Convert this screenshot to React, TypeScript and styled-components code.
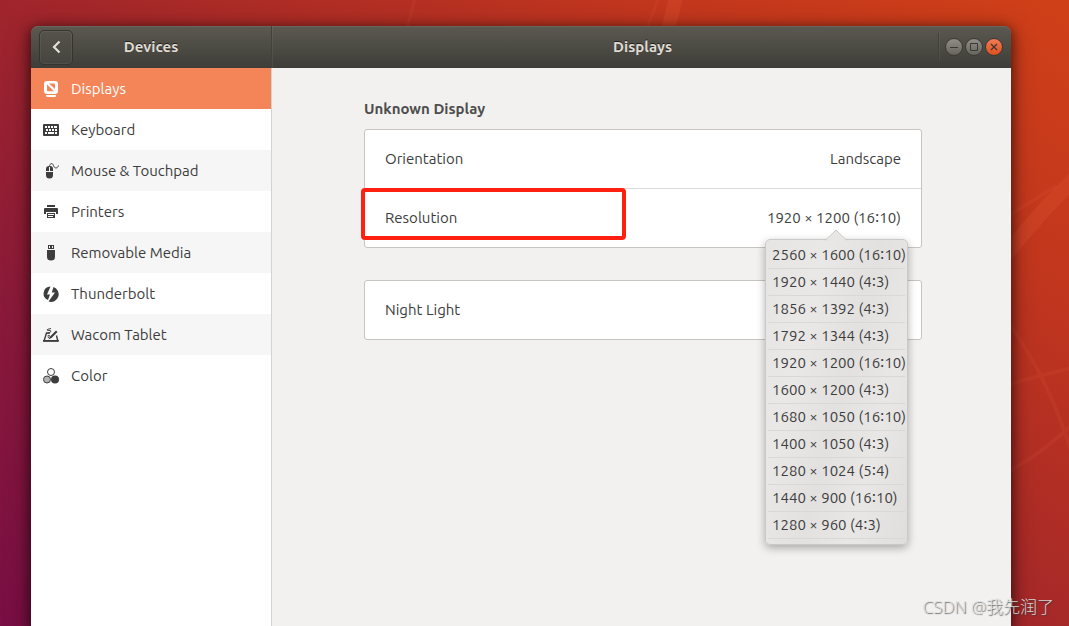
import React from "react";
import styled, { createGlobalStyle, css } from "styled-components";

const GlobalStyle = createGlobalStyle`
  *, *::before, *::after { box-sizing: border-box; }
  body {
    margin: 0;
    font-family: Ubuntu, Inter, "Noto Sans", "Noto Sans CJK SC", sans-serif;
    font-size: 15px;
    line-height: 20px;
    color: #3d3d3d;
  }
  button, select { font: inherit; color: inherit; }
`;

const Desktop = styled.div`
  position: relative;
  display: flex;
  min-height: 100vh;
  padding: 26px 58px 0 31px;
  overflow: hidden;
  background: linear-gradient(34deg, #780e44 0%, #8b1a39 25%, #a52829 52%, #c1361e 78%, #d04018 100%);
`;

const Wallpaper = styled.svg`
  position: absolute;
  inset: 0;
  width: 100%;
  height: 100%;
`;

const Window = styled.div`
  position: relative;
  flex: 1;
  display: flex;
  flex-direction: column;
  min-width: 0;
  border-radius: 7px 7px 0 0;
  box-shadow: 0 3px 12px 2px rgba(0, 0, 0, 0.5), 0 6px 28px rgba(0, 0, 0, 0.25);
`;

const HeaderBar = styled.header`
  display: flex;
  height: 42px;
  border-radius: 7px 7px 0 0;
  background: linear-gradient(#5b5950, #3e3d38);
  box-shadow: inset 0 1px #68665d;
  color: #dfdbd2;
  text-shadow: 0 -1px rgba(0, 0, 0, 0.6);
`;

const HeaderSection = styled.div<{ $side?: boolean }>`
  display: grid;
  grid-template-columns: 1fr auto 1fr;
  align-items: center;
  ${({ $side }) =>
    $side
      ? css`
          width: 241px;
          padding: 0 8px;
          border-right: 1px solid #42413b;
        `
      : css`
          flex: 1;
          padding: 0 8px 0 10px;
          box-shadow: inset 1px 0 rgba(255, 255, 255, 0.06);
        `}
`;

const Title = styled.h1`
  grid-column: 2;
  margin: 0;
  font-size: 15px;
  font-weight: 700;
  line-height: 20px;
`;

const BackButton = styled.button`
  display: grid;
  place-items: center;
  width: 34px;
  height: 35px;
  padding: 0;
  border: 1px solid #35342f;
  border-radius: 5px;
  background: linear-gradient(#55534b, #45443e);
  box-shadow: inset 0 0 0 1px rgba(255, 255, 255, 0.06);
`;

const WindowControls = styled.div`
  justify-self: end;
  display: flex;
  align-items: center;
  gap: 2px;
  height: 28px;
  padding-left: 6px;
  border-left: 1px solid #403f39;
  box-shadow: inset 1px 0 rgba(255, 255, 255, 0.06);
`;

const ControlButton = styled.button<{ $close?: boolean }>`
  display: grid;
  place-items: center;
  width: 18px;
  height: 18px;
  padding: 0;
  border: 1px solid #3a3933;
  border-radius: 50%;
  color: #3a3933;
  background: ${({ $close }) =>
    $close ? "linear-gradient(#f37b55, #e04f1c)" : "linear-gradient(#908e86, #66645c)"};
`;

const Body = styled.div`
  flex: 1;
  display: flex;
`;

const Sidebar = styled.nav`
  width: 241px;
  background: #fff;
  border-right: 1px solid #d5d3d0;
`;

const NavItem = styled.a<{ $active?: boolean }>`
  display: flex;
  align-items: center;
  gap: 12px;
  height: 41px;
  padding-left: 12px;
  text-decoration: none;
  color: ${({ $active }) => ($active ? "#fff" : "#3d3d3d")};
  background: ${({ $active }) => ($active ? "#f38559" : "#fff")};
  &:nth-child(2n + 3) {
    background: #f6f6f6;
  }
`;

const Content = styled.main`
  flex: 1;
  min-width: 0;
  padding: 30px 89px 40px 92px;
  background: #f2f1ef;
`;

const SectionTitle = styled.h2`
  margin: 0 0 9px;
  font-size: 15px;
  font-weight: 700;
  line-height: 22px;
  color: #4d4d4d;
`;

const Card = styled.section`
  border: 1px solid #c8c5c1;
  border-radius: 3px;
  background: #fff;
  & + & {
    margin-top: 32px;
  }
`;

const Row = styled.div`
  position: relative;
  display: flex;
  align-items: center;
  justify-content: space-between;
  height: 58px;
  padding: 0 20px;
  & + & {
    height: 59px;
    border-top: 1px solid #dcdad8;
  }
`;

const ValueSelect = styled.select`
  appearance: none;
  padding: 0;
  border: 0;
  background: none;
  text-align: right;
  text-align-last: right;
`;

const PlainButton = styled.button`
  padding: 0;
  border: 0;
  background: none;
`;

const Highlight = styled.div`
  position: absolute;
  top: -1px;
  left: -4px;
  width: 265px;
  height: 52px;
  border: 4px solid #ff2010;
  border-radius: 4px;
`;

const Popover = styled.ul`
  position: absolute;
  z-index: 1;
  top: 50px;
  right: 13px;
  width: 143px;
  margin: 0;
  padding: 2px 2px 5px;
  list-style: none;
  border: 1px solid #cbc9c6;
  border-radius: 5px;
  background: linear-gradient(105deg, #e6e5e3 0%, #e9e8e7 28%, #e2e1df 52%, #e8e7e6 74%, #dfdedc 100%);
  box-shadow: 0 3px 8px rgba(0, 0, 0, 0.3);
`;

const Pointer = styled.svg`
  position: absolute;
  top: -11px;
  left: 58px;
  width: 24px;
  height: 12px;
`;

const Option = styled.button`
  display: block;
  width: 100%;
  height: 27px;
  padding: 0 4px;
  border: 0;
  border-bottom: 1px solid #dad8d6;
  background: none;
  text-align: left;
  white-space: nowrap;
`;

const Watermark = styled.div`
  position: absolute;
  right: 15px;
  bottom: 6px;
  font-family: "Open Sans", "Noto Sans CJK SC", sans-serif;
  font-size: 17px;
  font-weight: 300;
  line-height: 26px;
  color: rgba(228, 228, 228, 0.9);
  text-shadow: 1px 1px 1px rgba(60, 60, 60, 0.8);
`;

const Icon = ({ children }: { children: React.ReactNode }) => (
  <svg width="16" height="16" viewBox="0 0 16 16" fill="currentColor" aria-hidden="true">
    {children}
  </svg>
);

const DisplaysIcon = () => (
  <Icon>
    <path
      fillRule="evenodd"
      d="M4 0h8a3 3 0 0 1 3 3v7a3 3 0 0 1-3 3H4a3 3 0 0 1-3-3V3a3 3 0 0 1 3-3zM6 2.500 12 8V3.500a1 1 0 0 0-1-1zM4 3.500V9.200a1 1 0 0 0 1 1h6z"
    />
    <path d="M3 14h10v1a1 1 0 0 1-1 1H4a1 1 0 0 1-1-1z" />
  </Icon>
);

const KeyboardIcon = () => (
  <Icon>
    <path
      fillRule="evenodd"
      d="M1 2h14a1 1 0 0 1 1 1v10a1 1 0 0 1-1 1H1a1 1 0 0 1-1-1V3a1 1 0 0 1 1-1zM2 4v2h2V4zM5 4v2h2V4zM8 4v2h2V4zM11 4v2h3V4zM3 7v2h2V7zM6 7v2h2V7zM9 7v2h2V7zM12 7v2h2V7zM2 10v2h2v-2zM5 10v2h6v-2zM12 10v2h2v-2z"
    />
  </Icon>
);

const MouseIcon = () => (
  <Icon>
    <path d="M6 3v5H3V6a3 3 0 0 1 3-3zM7 3a3 3 0 0 1 3 3v2H7zM3 9h7v3a3.500 3.500 0 0 1-7 0z" />
    <path d="M6.500 4C6.500-.5 10 0 10.500 2.500S14 6.500 15.500 2.500" fill="none" stroke="currentColor" />
  </Icon>
);

const PrinterIcon = () => (
  <Icon>
    <path d="M4 1h8v2H4zM2 4h12a1 1 0 0 1 1 1v5h-2V8H3v2H1V5a1 1 0 0 1 1-1z" />
    <path fillRule="evenodd" d="M4 9h8v5H4zM5 10v1h6v-1zM5 12v1h5v-1z" />
  </Icon>
);

const UsbIcon = () => (
  <Icon>
    <path fillRule="evenodd" d="M5 0h6v4H5zM6 1v2h1V1zM9 1v2h1V1z" />
    <path d="M4 5h8v7a4 3.500 0 0 1-8 0z" />
  </Icon>
);

const ThunderboltIcon = () => (
  <Icon>
    <path d="M7.500 .5 4 8.500h3L5 14A7 7 0 0 1 7.500 .5z" />
    <path d="M10.500 1A7 7 0 0 1 5.500 15.500L12 6.500H8.800z" />
  </Icon>
);

const TabletIcon = () => (
  <Icon>
    <path
      d="M7 6H3.500L1 14H14.800L13.500 8.500"
      fill="none"
      stroke="currentColor"
      strokeWidth="1.400"
    />
    <path d="M0 13h16l-.4 1.500H.2zM5.500 12.500 7 9.500 13 3.500l1.500 1.500L8.500 11z" />
    <path d="M8 1.500C3 2.500 3 3.500 6 3.500S9 4.500 4.500 6.500M4.500 9C7 7.500 7 8.500 5 11" fill="none" stroke="currentColor" />
  </Icon>
);

const ColorIcon = () => (
  <Icon>
    <circle cx="4" cy="11.500" r="3.500" fill="#b3b3b3" stroke="currentColor" />
    <circle cx="12" cy="11.500" r="4" />
    <circle cx="8" cy="4" r="3.500" fill="#fff" stroke="currentColor" />
  </Icon>
);

const panels = [
  { label: "Displays", icon: <DisplaysIcon />, active: true },
  { label: "Keyboard", icon: <KeyboardIcon /> },
  { label: "Mouse & Touchpad", icon: <MouseIcon /> },
  { label: "Printers", icon: <PrinterIcon /> },
  { label: "Removable Media", icon: <UsbIcon /> },
  { label: "Thunderbolt", icon: <ThunderboltIcon /> },
  { label: "Wacom Tablet", icon: <TabletIcon /> },
  { label: "Color", icon: <ColorIcon /> },
];

const resolutions = [
  "2560 × 1600 (16∶10)",
  "1920 × 1440 (4∶3)",
  "1856 × 1392 (4∶3)",
  "1792 × 1344 (4∶3)",
  "1920 × 1200 (16∶10)",
  "1600 × 1200 (4∶3)",
  "1680 × 1050 (16∶10)",
  "1400 × 1050 (4∶3)",
  "1280 × 1024 (5∶4)",
  "1440 × 900 (16∶10)",
  "1280 × 960 (4∶3)",
];

export default function App() {
  return (
    <>
      <GlobalStyle />
      <Desktop>
        <Wallpaper viewBox="0 0 1069 626" preserveAspectRatio="none" aria-hidden="true">
          <g fill="none" stroke="#ff7a50">
            <path d="M676-2 668 30" strokeWidth="14" opacity="0.14" />
            <path d="M660-5 642 40M416-5 404 40" strokeWidth="3" opacity="0.08" />
            <path d="M1000 262Q1040 212 1075 178" strokeWidth="15" opacity="0.12" />
            <path d="M1005 218 1056 186" strokeWidth="4" opacity="0.07" />
            <path d="M1008 322Q1050 380 1072 455M1005 385 1075 367M1008 472Q1044 452 1075 422" strokeWidth="4" opacity="0.08" />
          </g>
        </Wallpaper>
        <Window>
          <HeaderBar>
            <HeaderSection $side>
              <BackButton aria-label="Back">
                <svg width="16" height="16" viewBox="0 0 16 16" aria-hidden="true">
                  <path d="M11.500 2.500 6 8l5.500 5.500" fill="none" stroke="#e4e0d8" strokeWidth="2.200" />
                </svg>
              </BackButton>
              <Title>Devices</Title>
            </HeaderSection>
            <HeaderSection>
              <Title as="h2">Displays</Title>
              <WindowControls>
                <ControlButton aria-label="Minimize">
                  <Icon>
                    <path d="M4 8h8v1H4z" />
                  </Icon>
                </ControlButton>
                <ControlButton aria-label="Maximize">
                  <Icon>
                    <path d="M4.500 4.500h7v7h-7z" fill="none" stroke="currentColor" />
                  </Icon>
                </ControlButton>
                <ControlButton $close aria-label="Close">
                  <Icon>
                    <path d="m5 5 6 6m0-6-6 6" stroke="currentColor" strokeWidth="1.300" />
                  </Icon>
                </ControlButton>
              </WindowControls>
            </HeaderSection>
          </HeaderBar>
          <Body>
            <Sidebar aria-label="Devices">
              {panels.map(({ label, icon, active }) => (
                <NavItem key={label} href="#" $active={active} aria-current={active ? "page" : undefined}>
                  {icon}
                  {label}
                </NavItem>
              ))}
            </Sidebar>
            <Content>
              <SectionTitle>Unknown Display</SectionTitle>
              <Card>
                <Row>
                  <label htmlFor="orientation">Orientation</label>
                  <ValueSelect id="orientation" defaultValue="Landscape">
                    <option>Landscape</option>
                  </ValueSelect>
                </Row>
                <Row>
                  <label htmlFor="resolution">Resolution</label>
                  <PlainButton id="resolution" aria-haspopup="true" aria-expanded="true">
                    {resolutions[4]}
                  </PlainButton>
                  <Highlight />
                  <Popover aria-label="Resolution">
                    <Pointer viewBox="0 0 24 12" aria-hidden="true">
                      <path d="M1 12 12 1l11 11z" fill="#e7e6e4" />
                      <path d="M1 11.500 12 1l11 10.500" fill="none" stroke="#cbc9c6" />
                    </Pointer>
                    {resolutions.map((resolution) => (
                      <li key={resolution}>
                        <Option>{resolution}</Option>
                      </li>
                    ))}
                  </Popover>
                </Row>
              </Card>
              <Card>
                <Row>
                  <PlainButton>Night Light</PlainButton>
                </Row>
              </Card>
            </Content>
          </Body>
        </Window>
        <Watermark>CSDN @我先润了</Watermark>
      </Desktop>
    </>
  );
}
